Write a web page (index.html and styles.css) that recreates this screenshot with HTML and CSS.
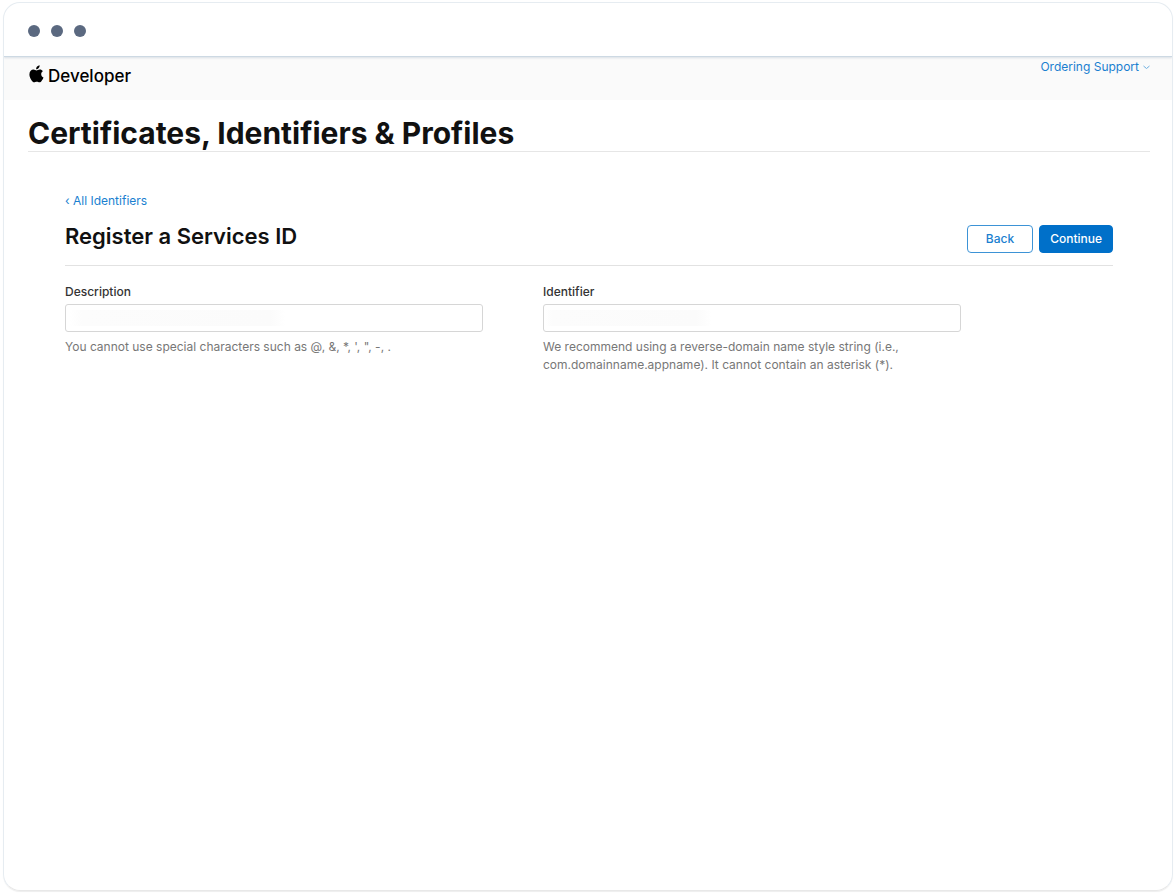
FILE: index.html
```html
<!DOCTYPE html>
<html lang="en">
<head>
<meta charset="utf-8">
<meta name="viewport" content="width=device-width, initial-scale=1">
<title>Certificates, Identifiers &amp; Profiles</title>
<link rel="stylesheet" href="styles.css">
</head>
<body>
<div class="window">
  <div class="titlebar">
    <span class="dot"></span><span class="dot"></span><span class="dot"></span>
  </div>
  <header class="site-header">
    <a class="brand" href="#">
      <svg class="brand-logo" viewBox="0 0 15 18" preserveAspectRatio="none" aria-hidden="true"><path d="M10.6.2c.15 1.1-.3 2.1-.9 2.850-.65.8-1.600 1.300-2.500 1.250C7.050 3.300 7.500 2.250 8.100 1.550 8.750.800 9.750.300 10.600.200zM13.900 6.200c-1.100.7-1.700 1.700-1.700 3 0 1.500.9 2.700 2.300 3.200-.4 1.200-1 2.300-1.800 3.300-.65.9-1.300 1.600-2.300 1.600s-1.400-.6-2.600-.6-1.700.6-2.650.6c-1 0-1.750-.9-2.500-1.900C1.300 13.700.400 11.600.400 9.600c0-3.200 2-5 4.100-5 1.200 0 2.200.8 3 .8.700 0 1.900-.85 3.300-.85 1.300 0 2.400.6 3.100 1.650z"/></svg>
      <span>Developer</span>
    </a>
    <a class="account" href="#">Ordering Support
      <svg class="chevron" viewBox="0 0 7 5" aria-hidden="true"><path d="M.5 1l3 2.500 3-2.500"/></svg>
    </a>
  </header>
  <main class="page">
    <h1 class="page-title">Certificates, Identifiers &amp; Profiles</h1>
    <form class="content">
      <a class="back-link" href="#">‹ All Identifiers</a>
      <div class="section-head">
        <h2 class="section-title">Register a Services ID</h2>
        <div class="actions">
          <button class="button" type="button">Back</button>
          <button class="button button-primary" type="button">Continue</button>
        </div>
      </div>
      <div class="fields">
        <div class="field">
          <label class="label" for="description">Description</label>
          <input class="input input-description" id="description" type="text" aria-describedby="description-help">
          <p class="help" id="description-help">You cannot use special characters such as @, &amp;, *, ', ", -, .</p>
        </div>
        <div class="field">
          <label class="label" for="identifier">Identifier</label>
          <input class="input input-identifier" id="identifier" type="text" aria-describedby="identifier-help">
          <p class="help" id="identifier-help">We recommend using a reverse-domain name style string (i.e., com.domainname.appname). It cannot contain an asterisk (*).</p>
        </div>
      </div>
    </form>
  </main>
</div>
</body>
</html>
```
FILE: styles.css
```css
* { box-sizing: border-box; }

body {
  margin: 0;
  padding: 2px 3px 4px;
  min-height: 100vh;
  display: flex;
  background: #fff;
  color: #111;
  font: 12px/18px Inter, "Liberation Sans", sans-serif;
}

a { color: #1a7fd0; text-decoration: none; }
h1, h2, p { margin: 0; }

.window {
  flex: 1;
  border: 1px solid #e6ecf1;
  border-bottom-color: #e8e8e8;
  border-radius: 17px;
  overflow: hidden;
  box-shadow: 0 1px 1px #eee;
}

.titlebar {
  display: flex;
  align-items: center;
  gap: 11px;
  height: 54px;
  padding: 3px 24px 0;
  border-bottom: 1px solid #cdd9e3;
  box-shadow: 0 1px 2px #d9dfe5;
  position: relative;
}

.dot {
  width: 12px;
  height: 12px;
  border-radius: 50%;
  background: #5b6980;
}

.site-header {
  display: flex;
  justify-content: space-between;
  align-items: flex-start;
  height: 43px;
  padding: 1px 22px 0 25px;
  background: #fafafa;
}

.brand {
  display: flex;
  align-items: center;
  gap: 4px;
  padding-top: 6px;
  color: #000;
  font-size: 17px;
  line-height: 24px;
  font-weight: 500;
}

.brand-logo { width: 15px; height: 18px; margin-bottom: 4px; }

.account {
  display: flex;
  align-items: center;
  gap: 4px;
}

.chevron {
  width: 7px;
  height: 5px;
  fill: none;
  stroke: #6fb0e2;
}

.page { padding: 16px 22px 40px 24px; }

.page-title {
  border-bottom: 1px solid #e6e6e6;
  font-size: 30px;
  line-height: 35px;
  font-weight: 700;
}

.content { padding: 40px 37px 0; }

.back-link { display: block; }

.section-head {
  display: flex;
  justify-content: space-between;
  align-items: flex-start;
  padding: 11px 0 12px;
  border-bottom: 1px solid #e2e2e2;
}

.section-title {
  font-size: 22px;
  line-height: 30px;
  font-weight: 600;
}

.actions { display: flex; gap: 6px; padding-top: 4px; }

.button {
  height: 28px;
  padding: 0 18px;
  border: 1px solid #3d93d6;
  border-radius: 4px;
  background: #fff;
  color: #1a7fd0;
  font: 500 12px/18px Inter, "Liberation Sans", sans-serif;
}

.button-primary {
  padding: 0 10px;
  border-color: #0070c9;
  background: #0070c9;
  color: #fff;
}

.fields {
  display: grid;
  grid-template-columns: 1fr 1fr;
  gap: 60px;
  padding: 17px 152px 0 0;
}

.label {
  display: block;
  margin-bottom: 3px;
  color: #333;
  font-weight: 500;
}

.input {
  display: block;
  width: 100%;
  height: 28px;
  padding: 0 8px;
  border: 1px solid #d6d6d6;
  border-radius: 3px;
  background: #fff;
  font: inherit;
}

.input-description { background: linear-gradient(90deg, #fff, #fcfcfc 12px, #fbfbfb 200px, #fff 215px) no-repeat 4px 50% / 220px 16px; }
.input-identifier { background: linear-gradient(90deg, #fff, #fcfcfc 6px, #fbfbfb 150px, #fff 165px) no-repeat 2px 50% / 170px 16px; }

.help {
  margin-top: 6px;
  color: #777;
}
```
